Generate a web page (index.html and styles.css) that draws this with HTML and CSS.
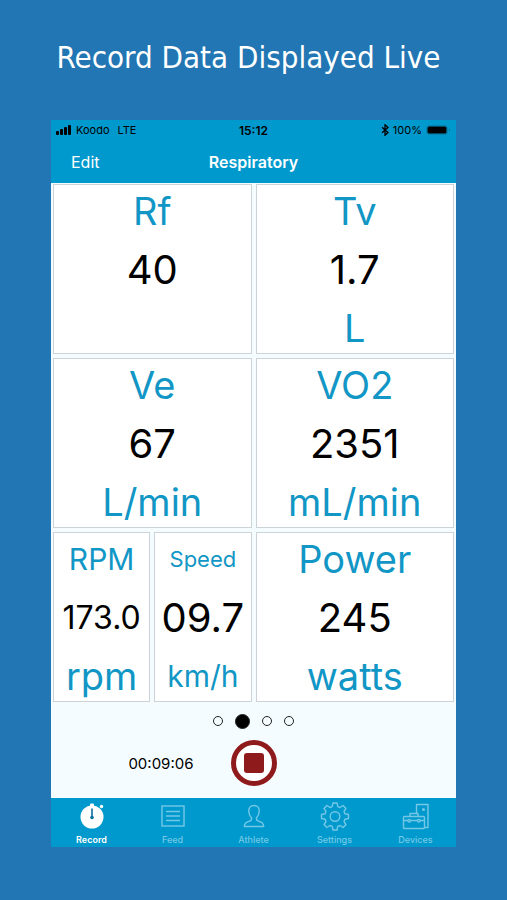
FILE: index.html
```html
<!DOCTYPE html>
<html lang="en">
<head>
<meta charset="UTF-8">
<meta name="viewport" content="width=device-width, initial-scale=1.0">
<title>Record Data Displayed Live</title>
<link rel="stylesheet" href="styles.css">
</head>
<body>
<h1 class="headline">Record Data Displayed Live</h1>

<div class="phone">
    <header class="top">
        <div class="status">
            <div class="status-left">
                <svg width="16" height="10" viewBox="0 0 16 10">
                    <rect x="0" y="6" width="3" height="4" rx="1"/>
                    <rect x="4" y="4" width="3" height="6" rx="1"/>
                    <rect x="8" y="2" width="3" height="8" rx="1"/>
                    <rect x="12" y="0" width="3" height="10" rx="1"/>
                </svg>
                <span>Koodo</span>
                <span class="network">LTE</span>
            </div>
            <div class="clock">15:12</div>
            <div class="status-right">
                <svg width="8" height="12" viewBox="0 0 8 12" fill="none" stroke="#000" stroke-width="1.3">
                    <path d="M1 3.2 L7 8.6 L4 11.3 V0.7 L7 3.4 L1 8.8"/>
                </svg>
                <span>100%</span>
                <svg width="25" height="10" viewBox="0 0 25 10">
                    <rect x="0.5" y="0.5" width="21" height="9" rx="2.5" fill="none" stroke="#0483b0"/>
                    <rect x="1.5" y="1.5" width="19" height="7" rx="1.5"/>
                    <path d="M23 3.5 Q24.5 5 23 6.5 Z" fill="#04526e"/>
                </svg>
            </div>
        </div>
        <div class="navbar">
            <button class="edit" type="button">Edit</button>
            <h2 class="title">Respiratory</h2>
        </div>
    </header>

    <main class="metrics">
        <section class="metric">
            <div class="label">Rf</div>
            <div class="value">40</div>
            <div class="unit"></div>
        </section>
        <section class="metric">
            <div class="label">Tv</div>
            <div class="value">1.7</div>
            <div class="unit">L</div>
        </section>
        <section class="metric">
            <div class="label">Ve</div>
            <div class="value">67</div>
            <div class="unit">L/min</div>
        </section>
        <section class="metric">
            <div class="label">VO2</div>
            <div class="value">2351</div>
            <div class="unit">mL/min</div>
        </section>
        <div class="split">
            <section class="metric">
                <div class="label medium">RPM</div>
                <div class="value reduced">173.0</div>
                <div class="unit">rpm</div>
            </section>
            <section class="metric">
                <div class="label small">Speed</div>
                <div class="value">09.7</div>
                <div class="unit medium">km/h</div>
            </section>
        </div>
        <section class="metric">
            <div class="label">Power</div>
            <div class="value">245</div>
            <div class="unit">watts</div>
        </section>
    </main>

    <div class="controls">
        <div class="pages">
            <button class="dot" type="button" aria-label="Page 1"></button>
            <button class="dot current" type="button" aria-label="Page 2"></button>
            <button class="dot" type="button" aria-label="Page 3"></button>
            <button class="dot" type="button" aria-label="Page 4"></button>
        </div>
        <div class="recorder">
            <div class="timer">00:09:06</div>
            <button class="stop" type="button" aria-label="Stop recording"><span class="stop-square"></span></button>
        </div>
    </div>

    <nav class="tabs">
        <a class="tab active" href="#record">
            <svg width="30" height="30" viewBox="0 0 30 30">
                <circle cx="15" cy="16" r="11.5" fill="#fff"/>
                <rect x="13" y="2.5" width="4" height="3" rx="1" fill="#fff"/>
                <circle cx="24.5" cy="5.5" r="1.7" fill="#fff"/>
                <path d="M15 7.5 V16" stroke="#0a6f9c" stroke-width="1.6"/>
                <circle cx="15" cy="16.5" r="1.8" fill="#0a6f9c"/>
            </svg>
            <span>Record</span>
        </a>
        <a class="tab" href="#feed">
            <svg width="30" height="30" viewBox="0 0 30 30" fill="none" stroke="currentColor" stroke-width="1.4">
                <rect x="4" y="5" width="22" height="20"/>
                <path d="M8 10.5 H22 M8 15 H22 M8 19.5 H22"/>
            </svg>
            <span>Feed</span>
        </a>
        <a class="tab" href="#athlete">
            <svg width="30" height="30" viewBox="0 0 30 30" fill="none" stroke="currentColor" stroke-width="1.4" stroke-linejoin="round">
                <path d="M15 4.5 C11.5 4.5 9.5 6.8 9.8 10.5 C10 13.8 11.2 15.5 12.6 17 C12.8 19 12.2 19.6 10.5 20.2 C7 21.4 5.5 22 5.3 25.5 H24.7 C24.5 22 23 21.4 19.5 20.2 C17.8 19.6 17.2 19 17.4 17 C18.8 15.5 20 13.8 20.2 10.5 C20.5 6.8 18.5 4.5 15 4.5 Z"/>
            </svg>
            <span>Athlete</span>
        </a>
        <a class="tab" href="#settings">
            <svg width="30" height="30" viewBox="0 0 30 30" fill="none" stroke="currentColor" stroke-width="1.4" stroke-linejoin="round">
                <circle cx="15" cy="15.5" r="4.8"/>
                <path d="M13 2 H17 L17.8 5.6 L20 6.5 L23.1 4.5 L26 7.4 L24 10.5 L24.9 12.7 L28.5 13.5 V17.5 L24.9 18.3 L24 20.5 L26 23.6 L23.1 26.5 L20 24.5 L17.8 25.4 L17 29 H13 L12.2 25.4 L10 24.5 L6.9 26.5 L4 23.6 L6 20.5 L5.1 18.3 L1.5 17.5 V13.5 L5.1 12.7 L6 10.5 L4 7.4 L6.9 4.5 L10 6.5 L12.2 5.6 Z"/>
            </svg>
            <span>Settings</span>
        </a>
        <a class="tab" href="#devices">
            <svg width="30" height="30" viewBox="0 0 30 30" fill="none" stroke="currentColor" stroke-width="1.4" stroke-linejoin="round">
                <path d="M15.5 12.5 V3.5 H27 V26.5 H24"/>
                <circle cx="22.5" cy="8.5" r="0.8" fill="currentColor"/>
                <rect x="2.5" y="15.5" width="21" height="12" rx="1"/>
                <path d="M9 15.5 V12.5 H17 V15.5 M2.5 19.5 H7 M9.5 19.5 H16.5 M19 19.5 H23.5"/>
                <circle cx="8.2" cy="19.7" r="1.3"/>
                <circle cx="17.8" cy="19.7" r="1.3"/>
            </svg>
            <span>Devices</span>
        </a>
    </nav>
</div>
</body>
</html>
```
FILE: styles.css
```css
* {
    box-sizing: border-box;
}

body {
    margin: 0;
    padding: 0 51px;
    min-height: 100vh;
    background-color: #2176b3;
    font-family: "Inter", "Liberation Sans", sans-serif;
    color: #000;
}

button {
    padding: 0;
    border: none;
    background: none;
    font: inherit;
    color: inherit;
    cursor: pointer;
}

.headline {
    margin: 0;
    padding: 37px 10px 43px 0;
    font-family: Tahoma, "DejaVu Sans Condensed", "DejaVu Sans", sans-serif;
    font-size: 31px;
    font-weight: normal;
    line-height: 40px;
    text-align: center;
    white-space: nowrap;
    color: #fff;
}

.phone {
    background-color: #f5fcff;
}

.top {
    background-color: #0099cd;
}

/* Status bar */
.status {
    display: grid;
    grid-template-columns: 1fr auto 1fr;
    align-items: center;
    height: 20px;
    padding: 0 5px;
    font-size: 11px;
}

.status-left,
.status-right {
    display: flex;
    align-items: center;
    gap: 4px;
}

.status-right {
    justify-content: flex-end;
}

.network {
    margin-left: 4px;
}

.clock {
    font-size: 12px;
    font-weight: 600;
}

.navbar {
    display: grid;
    grid-template-columns: 1fr auto 1fr;
    align-items: center;
    height: 43px;
    padding: 0 20px;
    font-size: 16px;
    color: #fff;
}

.edit {
    justify-self: start;
}

.title {
    margin: 0;
    font-size: 16px;
    font-weight: 600;
}

/* Metrics */
.metrics {
    display: grid;
    grid-template-columns: 1fr 1fr;
    gap: 4px;
    padding: 1px 2px 0;
}

.split {
    display: grid;
    grid-template-columns: 1fr 1fr;
    gap: 4px;
}

.metric {
    display: flex;
    flex-direction: column;
    justify-content: space-between;
    height: 170px;
    min-width: 0;
    padding-top: 1px;
    border: 1px solid #cdd4d7;
    background-color: #fff;
    font-size: 40px;
    line-height: 50px;
    text-align: center;
    white-space: nowrap;
}

.label,
.unit {
    height: 50px;
    font-size: 38px;
    color: #1196c5;
}

.reduced {
    font-size: 32px;
}

.medium {
    font-size: 30px;
}

.small {
    font-size: 22px;
}

/* Paging dots and recorder */
.controls {
    padding: 11px 0 12px;
}

.pages {
    display: flex;
    justify-content: center;
    align-items: center;
    gap: 12px;
    height: 16px;
}

.dot {
    width: 10px;
    height: 10px;
    border: 1px solid #222;
    border-radius: 50%;
}

.dot.current {
    width: 15px;
    height: 15px;
    background-color: #000;
}

.recorder {
    display: grid;
    grid-template-columns: 1fr auto 1fr;
    align-items: center;
    margin-top: 11px;
}

.timer {
    padding-right: 37px;
    font-size: 15px;
    text-align: right;
}

.stop {
    display: flex;
    justify-content: center;
    align-items: center;
    width: 46px;
    height: 46px;
    border: 5px solid #8f1a1c;
    border-radius: 50%;
    background-color: #fff;
}

.stop-square {
    width: 20px;
    height: 20px;
    border-radius: 3px;
    background-color: #8f1a1c;
}

/* Tab bar */
.tabs {
    display: grid;
    grid-template-columns: repeat(5, 1fr);
    height: 49px;
    background-color: #0099cd;
}

.tab {
    display: flex;
    flex-direction: column;
    align-items: center;
    gap: 2px;
    padding-top: 3px;
    font-size: 9px;
    font-weight: 500;
    line-height: 14px;
    text-decoration: none;
    color: #74c8e6;
}

.tab.active {
    font-weight: 600;
    color: #fff;
}
```
